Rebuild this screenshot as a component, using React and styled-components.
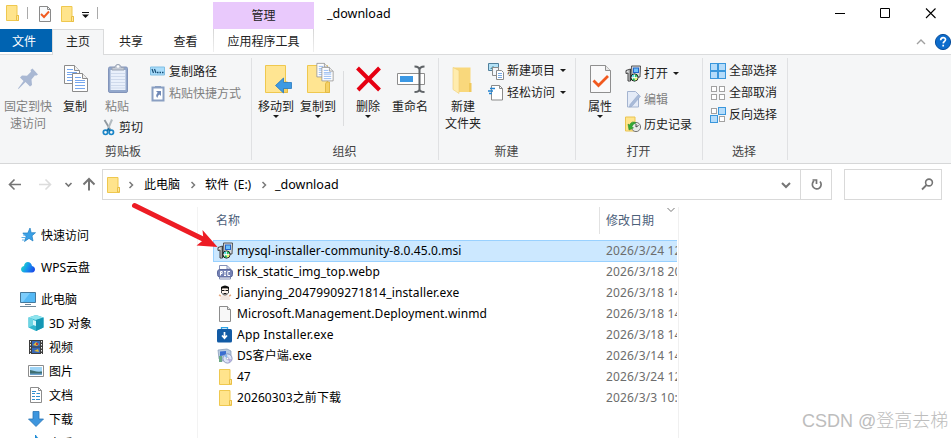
import React, { useState } from 'react';
import styled, { createGlobalStyle } from 'styled-components';

const GlobalStyle = createGlobalStyle`
  body {
    margin: 0;
    background: #fff;
    overflow: hidden;
  }
`;

const Window = styled.div`
  position: relative;
  display: flex;
  flex-direction: column;
  width: 951px;
  height: 438px;
  overflow: hidden;
  background: #fff;
  color: #000;
  font-family: "Noto Sans", "Noto Sans CJK SC", sans-serif;
  font-size: 12px;
  line-height: 17px;
  white-space: nowrap;
  cursor: default;
`;

const Svg = styled.svg`
  display: block;
  flex: none;
  overflow: visible;
`;

/* ---------- title bar ---------- */

const TitleBar = styled.div`
  display: flex;
  height: 29px;
  flex: none;
`;

const QuickAccess = styled.div`
  display: flex;
  width: 213px;
`;

const ContextTitle = styled.div`
  width: 101px;
  height: 27px;
  margin-top: 2px;
  background: #e9c9fc;
  color: #222;
  line-height: 28px;
  text-align: center;
`;

const Caption = styled.div`
  flex: 1;
  padding-left: 13px;
  font-size: 12.5px;
  line-height: 28px;
`;

const CaptionButtons = styled.div`
  display: flex;
  width: 136px;
`;

/* ---------- tabs ---------- */

const TabRow = styled.div`
  display: flex;
  height: 26px;
  flex: none;
  box-shadow: inset 0 -1px #dadbdc;
`;

const Tab = styled.div`
  box-sizing: border-box;
  width: ${p => p.$width}px;
  height: 23px;
  line-height: 25px;
  text-align: center;
  color: #222;
`;

const FileTab = styled(Tab)`
  background: #0063b1;
  color: #fff;
  padding-right: 4px;
`;

const ActiveTab = styled(Tab)`
  height: 26px;
  border: 1px solid #dadbdc;
  border-bottom: none;
  background: #f5f6f7;
  line-height: 24px;
`;

const ContextTab = styled(Tab)`
  border: solid;
  border-width: 0 1px;
  border-image: linear-gradient(#d4d4d4, #f0f0f0) 1;
`;

const TabTools = styled.div`
  flex: 1;
  display: flex;
  justify-content: flex-end;
`;

/* ---------- ribbon ---------- */

const Ribbon = styled.div`
  display: flex;
  box-sizing: border-box;
  height: 109px;
  flex: none;
  padding-top: 3px;
  background: #f5f6f7;
  border-bottom: 1px solid #d6d7d8;
`;

const Group = styled.div`
  display: flex;
  flex-direction: column;
  box-sizing: border-box;
  width: ${p => p.$width}px;
  height: 102px;
  border-right: 1px solid #e0e1e3;
`;

const GroupBody = styled.div`
  display: flex;
  height: 85px;
  padding-left: ${p => p.$left || 0}px;
`;

const GroupLabel = styled.div`
  height: 17px;
  padding-right: ${p => p.$shift || 0}px;
  text-align: center;
  color: #444;
`;

const Column = styled.div`
  display: flex;
  flex-direction: column;
  gap: ${p => p.$gap || 0}px;
  padding-top: ${p => p.$top || 0}px;
  padding-left: ${p => p.$left || 0}px;
`;

const BigButton = styled.div`
  display: flex;
  flex-direction: column;
  align-items: center;
  width: ${p => p.$width}px;
  padding-top: 4px;
  color: ${p => (p.$disabled ? '#808080' : '#222')};
  text-align: center;

  > svg:first-child {
    margin-bottom: 4px;
  }
`;

const SmallButton = styled.div`
  display: flex;
  align-items: center;
  height: 17px;
  gap: 3px;
  color: ${p => (p.$disabled ? '#808080' : '#222')};

  > svg + svg {
    margin-left: 2px;
  }
`;

const InnerRule = styled.div`
  width: 1px;
  height: 55px;
  margin: 13px 3px 0 4px;
  background: #dcdddf;
`;

/* ---------- address bar ---------- */

const AddressRow = styled.div`
  display: flex;
  height: 36px;
  flex: none;
  padding-top: 5px;
  box-sizing: border-box;
`;

const NavButtons = styled.div`
  width: 102px;
`;

const AddressBox = styled.div`
  display: flex;
  align-items: center;
  box-sizing: border-box;
  width: 730px;
  height: 31px;
  border: 1px solid #d9d9d9;
`;

const Crumb = styled.div`
  width: ${p => p.$width}px;
  word-spacing: 2px;
`;

const LastCrumb = styled.div`
  flex: 1;
  font-size: 12.5px;
`;

const Refresh = styled.div`
  box-sizing: border-box;
  width: 31px;
  height: 29px;
  border-left: 1px solid #d9d9d9;
`;

const SearchBox = styled.div`
  box-sizing: border-box;
  width: 98px;
  height: 31px;
  margin-left: 12px;
  padding-left: 76px;
  border: 1px solid #d9d9d9;
`;

/* ---------- body ---------- */

const Body = styled.div`
  display: flex;
  flex: 1;
  min-height: 0;
  padding-top: 7px;
`;

const Tree = styled.div`
  box-sizing: border-box;
  width: 198px;
  padding: 16px 0 0 20px;
  border-right: 1px solid #f3f3f3;
  overflow: hidden;
`;

const TreeItem = styled.div`
  display: flex;
  align-items: center;
  gap: 5px;
  height: 24px;
  padding-left: ${p => (p.$child ? 8 : 0)}px;
  margin-bottom: ${p => (p.$spaced ? 8 : 0)}px;
`;

const FileList = styled.div`
  box-sizing: border-box;
  width: 481px;
  padding-left: 15px;
  padding-right: 1px;
  border-right: 1px solid #f0f0f0;
`;

const Header = styled.div`
  display: flex;
  height: 27px;
  margin-bottom: 6px;
  line-height: 27px;
  color: #4c607a;
`;

const HeaderName = styled.div`
  box-sizing: border-box;
  width: 387px;
  padding-left: 3px;
  border-right: 1px solid #e2e2e2;
`;

const HeaderDate = styled.div`
  display: flex;
  gap: 13px;
  padding-left: 6px;
`;

const FileRow = styled.div`
  display: flex;
  align-items: center;
  box-sizing: border-box;
  height: ${p => (p.$selected ? 22 : 21)}px;
  padding-left: 4px;
  padding-bottom: 1px;
  overflow: hidden;
  background: ${p => (p.$selected ? '#cce8ff' : 'transparent')};
  box-shadow: ${p => (p.$selected ? 'inset 0 1px #99d1ff, inset 1px 0 #99d1ff, inset 0 -1px #99d1ff' : 'none')};
`;

const FileName = styled.div`
  flex: none;
  box-sizing: border-box;
  width: 373px;
  padding-left: 4px;
  padding-bottom: 1px;
  letter-spacing: ${p => p.$spacing || 0}px;
`;

// the column is narrower than the full timestamp, so it is cut at the pane edge
const FileDate = styled.div`
  flex: none;
  width: 71px;
  padding-bottom: 1px;
  overflow: hidden;
  letter-spacing: 0.15px;
  color: #6d6d6d;
`;

const Pointer = styled.svg`
  position: absolute;
  left: 128px;
  top: 198px;
`;

const Watermark = styled.div`
  position: absolute;
  left: 802px;
  top: 408px;
  font-family: "Liberation Sans", "Noto Sans CJK SC", sans-serif;
  font-size: 18px;
  font-weight: 300;
  line-height: 26px;
  color: #bdbdbd;
`;

/* ---------- icons ---------- */

const Folder = ({ inset = 0 }) => (
  <Svg width={16 + inset} height="16" viewBox={`${-inset} 0 ${16 + inset} 16`}>
    <path d="M2.500.500h10.500v10h1.500v5h-12z" fill="#ffe48c" stroke="#efc84f" />
    <path d="M12.500 15v-4.500h2v4.500z" fill="#ffe79b" stroke="#e9bf45" />
  </Svg>
);

const Caret = () => (
  <Svg width="6" height="3" viewBox="0 0 6 3">
    <path d="M0 0h6L3 3z" fill="#1b1b1b" />
  </Svg>
);

const QuickIcons = () => (
  <Svg width="110" height="29">
    <path d="M6.500 5.500h10.500v10h1.500v5h-12z" fill="#ffe48c" stroke="#efc84f" />
    <path d="M16.500 20.500v-5h2v5z" fill="#ffe79b" stroke="#e9bf45" />
    <path d="M27.500 7v12M97.500 7v12" stroke="#aaa" />
    <path d="M39.500 6.500h8l3 3v12h-11z" fill="#f8fafc" stroke="#8a8a8a" />
    <path d="M47.500 6.500v3h3" fill="none" stroke="#8a8a8a" />
    <path d="M41 14l3 3 5-5.500" fill="none" stroke="#f05a20" strokeWidth="1.900" />
    <path d="M61.500 6.500h10.500v10h1.500v5h-12z" fill="#ffe48c" stroke="#efc84f" />
    <path d="M71.500 21.500v-5h2v5z" fill="#ffe79b" stroke="#e9bf45" />
    <path d="M82 12.500h7" stroke="#111" />
    <path d="M82 14.500h7l-3.500 3.500z" fill="#111" />
  </Svg>
);

const CaptionIcons = () => (
  <Svg width="136" height="29">
    <g fill="none" stroke="#000">
      <path d="M20 13.500h10M65.500 8.500h9v9h-9z" />
      <path d="M111 8.500l9.500 9.500M120.500 8.500l-9.500 9.500" strokeWidth="1.100" />
    </g>
  </Svg>
);

const HelpIcons = () => (
  <Svg width="41" height="26">
    <path d="M7 15l4-4 4 4" fill="none" stroke="#a0a0a0" strokeWidth="1.400" />
    <circle cx="33" cy="13" r="7.600" fill="#0c6ccc" stroke="#0a4f9c" />
    <path d="M30.700 11.200c0-3.400 5-3.200 4.800-.4-.1 1.500-2.200 1.600-2.300 3.600M33.200 15.800v1.800" fill="none" stroke="#fff" strokeWidth="1.700" />
  </Svg>
);

const PinIcon = () => (
  <Svg width="32" height="32">
    <path d="M20.500 6.500l5.500 6-2 1.200-1-.5-3.500 4.300.5 5.500-2 1.500-4.500-4.500L6.500 27 6 26.500l5.500-7.500L8 15.500l2-2 5 .2 4-4-.5-1.700z" fill="#a9b8d3" />
  </Svg>
);

const Sheet = ({ x, y }) => (
  <g transform={`translate(${x} ${y})`}>
    <path d="M.5.500h10l5 5v13H.500z" fill="#fff" stroke="#8b8b8b" />
    <path d="M10.500.500v5h5" fill="#eee" stroke="#8b8b8b" />
    <path d="M3 4.500h6M3 7.500h10M3 9.500h10M3 12.500h10M3 15.500h10" stroke="#76a7ee" />
  </g>
);

const CopyIcon = () => (
  <Svg width="32" height="32">
    <Sheet x={5} y={3} />
    <Sheet x={13} y={11} />
  </Svg>
);

const PasteIcon = () => (
  <Svg width="32" height="32">
    <rect x="7.500" y="5" width="19" height="25.500" rx="1.500" fill="#93a8cc" stroke="#8294ba" />
    <path d="M9.500 8h15v20h-15z" fill="#e9f0fb" />
    <path d="M10 11.500h14M10 14.500h14M10 17.500h14M10 20.500h14M10 23.500h14M10 26h14" stroke="#cfdaec" />
    <path d="M11 8V5.500h3c0-4 6-4 6 0h3V8z" fill="#c5cbd6" stroke="#9aa4b5" />
    <circle cx="17" cy="4.500" r="1.200" fill="#fff" />
  </Svg>
);

const CutIcon = () => (
  <Svg width="14" height="17">
    <path d="M2.500 1l6 10" stroke="#8f989f" strokeWidth="1.800" />
    <path d="M10 .5L5.500 11" stroke="#b2babf" strokeWidth="2" />
    <circle cx="3.500" cy="13.300" r="2.200" fill="none" stroke="#1b86c8" strokeWidth="1.700" />
    <circle cx="9.300" cy="13.300" r="2.200" fill="none" stroke="#1b86c8" strokeWidth="1.700" />
    <path d="M5 12l1.500-2L8 12" fill="none" stroke="#126da6" strokeWidth="1.500" />
  </Svg>
);

const PathIcon = () => (
  <Svg width="16" height="10">
    <path d="M.5 1h14v8H.500z" fill="#a9dcfa" stroke="#80bfe4" />
    <path d="M2 3l1.500 4M4.500 3L6 7" stroke="#164c74" strokeWidth="1.200" />
    <path d="M7 6.500h1.500M9.500 6.500H11M12 6.500h1.500" stroke="#164c74" strokeWidth="1.300" />
  </Svg>
);

const ShortcutIcon = () => (
  <Svg width="16" height="17">
    <path d="M2.500 2.500h11v13h-11z" fill="#fff" stroke="#8a9fc2" strokeWidth="2" />
    <path d="M5 3V1h6v2z" fill="#8a9fc2" />
    <path d="M6 6h5v5L9.500 9.500C8 10.500 7.500 12 7.500 13 5.500 11 6 9.500 7.700 7.700z" fill="#7089b6" />
  </Svg>
);

const BigFolder = () => (
  <g>
    <path d="M5.500 3.500h20v17.500h2v9.500h-22z" fill="#ffe592" stroke="#efc84f" />
    <path d="M23.500 30v-8l1-2h3v10.500h-4z" fill="#f5d165" stroke="#e3ba45" />
  </g>
);

const MoveIcon = () => (
  <Svg width="32" height="32">
    <BigFolder />
    <path d="M15.500 23.500l8-7.500v4.500h8v6h-8V31z" fill="#3e9ae3" stroke="#2779bf" strokeWidth=".8" />
  </Svg>
);

const CopyToIcon = () => (
  <Svg width="32" height="32">
    <BigFolder />
    <g transform="translate(14.500 1) scale(.75)"><Sheet x={0} y={0} /></g>
    <g transform="translate(19.500 5) scale(.75)"><Sheet x={0} y={0} /></g>
  </Svg>
);

const DeleteIcon = () => (
  <Svg width="32" height="32">
    <path d="M5.500 6l22 22M27.500 6L6 28" stroke="#e60012" strokeWidth="4" />
  </Svg>
);

const RenameIcon = () => (
  <Svg width="32" height="32">
    <path d="M3.500 11.500h27v11h-27z" fill="#fff" stroke="#8d8d8d" />
    <path d="M6 14h13v6H6z" fill="#3b98e4" />
    <path d="M20.500 4.500q5 0 5 3.500v19q0 3-5 3M30.500 4.500q-5 0-5 3.500v19q0 3 5 3" fill="none" stroke="#5f6367" strokeWidth="2" />
  </Svg>
);

const NewFolderIcon = () => (
  <Svg width="32" height="32">
    <path d="M6 5.500h17.500v24.500H11z" fill="#f9d87c" />
    <path d="M6 5.500l6 3v23l-6-4z" fill="#ffecae" stroke="#efcf76" strokeWidth=".6" />
    <path d="M22 21h2.500v9H22z" fill="#f0c95c" />
  </Svg>
);

const NewItemIcon = () => (
  <Svg width="16" height="18">
    <path d="M.5 1.500h10v7H.500z" fill="#b4e2f7" stroke="#50809c" />
    <path d="M2 7l3-3 2 2 1-1 2 2z" fill="#4b91a0" />
    <path d="M4.500 5.500h6v8h-6z" fill="#f3f6f9" stroke="#8b8b8b" />
    <path d="M8.500 8.500h5l2 2v7h-7z" fill="#fff" stroke="#8b8b8b" />
    <path d="M10 11.500h4M10 13.500h4M10 15.500h4" stroke="#78a9e2" />
  </Svg>
);

const EasyAccessIcon = () => (
  <Svg width="16" height="17">
    <path d="M3.500 1.500h8l3 3v11.500h-11z" fill="#fff" stroke="#8b8b8b" />
    <path d="M11.500 1.500v3h3" fill="none" stroke="#8b8b8b" />
    <path d="M2 4.500h5M0 7h5M1 9.500h3" stroke="#2384d1" strokeWidth="1.400" />
  </Svg>
);

const PropertiesIcon = () => (
  <Svg width="32" height="32">
    <path d="M6.500 3.500h15l5 5v22h-20z" fill="#f9f9fa" stroke="#8f8f8f" />
    <path d="M21.500 3.500v5h5" fill="#e7e7e7" stroke="#8f8f8f" />
    <path d="M9.500 18.500l5 5 9.500-9.500" fill="none" stroke="#f1591f" strokeWidth="2.800" />
  </Svg>
);

const MsiIcon = () => (
  <Svg width="16" height="17">
    <path d="M6.500 1h9l-.5 11H7z" fill="#d9dde2" stroke="#444" strokeWidth=".9" />
    <path d="M8 2.500h6V8H8z" fill="#2364c8" />
    <path d="M9 3.500h4v3.500H9z" fill="#6cc1fb" />
    <path d="M1 5.500L5.500 4v12H3V8L1 8.500z" fill="#e6e8ea" stroke="#2b2b2b" strokeWidth=".9" />
    <path d="M4.200 5v10" stroke="#555" strokeWidth=".7" />
    <circle cx="9.500" cy="12.500" r="3.600" fill="#e8f4ea" stroke="#111" strokeWidth="1" />
    <path d="M9.500 12.500L6.500 11l2-1.800z" fill="#36dce2" />
    <path d="M9.500 12.500l3.300 1-2 2.300z" fill="#edf55a" />
    <path d="M9.500 12.500L7 14.800l3 1.200zM9.500 12.500l1-3.400 2.300 2z" fill="#1db954" />
    <circle cx="9.500" cy="12.500" r=".9" fill="#fff" />
  </Svg>
);

const EditIcon = () => (
  <Svg width="16" height="17">
    <path d="M2.500.500h8l3 3v12.500h-11z" fill="#e4ebf7" stroke="#a4b4d0" />
    <path d="M5 13.500l8.500-10 2 1.800-8.500 10L4.500 16z" fill="#a9bbd8" stroke="#8ca1c5" strokeWidth=".5" />
  </Svg>
);

const HistoryIcon = () => (
  <Svg width="16" height="17">
    <path d="M.5 1h9.500v14H.500z" fill="#ffe48c" stroke="#eac450" />
    <circle cx="11" cy="11" r="4.600" fill="#e7e9e7" stroke="#777" />
    <path d="M11 8v3l2.500-1.500" fill="none" stroke="#444" />
    <path d="M3 8l1 6 4.500-2-1.500-1.500Q8 7.500 11 7 7 4 4.500 9z" fill="#36a935" stroke="#228426" strokeWidth=".5" />
  </Svg>
);

// kind: 'all' | 'none' | 'invert'
const SelectIcon = ({ kind }) => {
  const cells = [[0, 0], [1, 0], [0, 1], [1, 1]];
  return (
    <Svg width="16" height="16">
      {cells.map(([cx, cy]) => {
        const on = kind === 'all' || (kind === 'invert' && cx !== cy);
        return on ? (
          <rect key={`${cx}${cy}`} x={cx * 8 + 0.5} y={cy * 8 + 0.5} width="7" height="7" fill="#b5dcfa" stroke="#3a97dc" />
        ) : (
          <rect key={`${cx}${cy}`} x={cx * 8 + 1.5} y={cy * 8 + 1.5} width="5" height="5" fill="#fff" stroke="#a2a2a2" />
        );
      })}
    </Svg>
  );
};

const NavIcons = () => (
  <Svg width="102" height="31">
    <g fill="none" stroke="#757575" strokeWidth="1.600">
      <path d="M21 15.500H10M14.500 10.500l-5 5 5 5" />
      <path d="M39 15.500h11M45.500 10.500l5 5-5 5" stroke="#dcdcdc" />
      <path d="M65.500 14l3 3 3-3" />
      <path d="M89 21.500V11M83.500 15.500l5.500-5.500 5.500 5.500" strokeWidth="2" />
    </g>
  </Svg>
);

const CrumbArrow = () => (
  <Svg width="8" height="10">
    <path d="M2.500 2l3 3-3 3" fill="none" stroke="#7a7a7a" strokeWidth="1.500" />
  </Svg>
);

const DropIcon = () => (
  <Svg width="10" height="8">
    <path d="M1 2l4 4 4-4" fill="none" stroke="#757575" strokeWidth="2" />
  </Svg>
);

const RefreshIcon = () => (
  <Svg width="30" height="29">
    <path d="M13 11A4.400 4.400 0 1 0 19 11.500" fill="none" stroke="#757575" strokeWidth="1.700" />
    <path d="M11.500 10h4v4" fill="none" stroke="#757575" strokeWidth="1.700" />
  </Svg>
);

const SearchIcon = () => (
  <Svg width="14" height="29">
    <circle cx="8" cy="12.500" r="3.400" fill="none" stroke="#757575" strokeWidth="1.600" />
    <path d="M5.500 15L1 19.500" stroke="#757575" strokeWidth="1.800" />
  </Svg>
);

const StarIcon = () => (
  <Svg width="16" height="16">
    <path d="M10 1l1.200 4.700H15.500L12 8.800l1 5.200-4-2.600L4.500 14.500 6 9.500 2.800 6h5z" fill="#3aa0e6" stroke="#1f7ec2" strokeWidth=".7" />
    <path d="M3 8h2.500M1.500 10.500H5M2 13h2.500" stroke="#5fb2ea" />
  </Svg>
);

const CloudIcon = () => (
  <Svg width="16" height="16">
    <defs>
      <linearGradient id="cloud" x1="0" x2="1" y1=".3" y2=".7">
        <stop offset="0" stopColor="#20e0c4" />
        <stop offset=".5" stopColor="#1693ee" />
        <stop offset="1" stopColor="#1a48e8" />
      </linearGradient>
    </defs>
    <path d="M4.500 13.500C0 13.500 0 7.500 4 7c.5-5.500 7-5.500 8 0 4 .5 4 6.500 0 6.500z" fill="url(#cloud)" />
  </Svg>
);

const PcIcon = () => (
  <Svg width="16" height="16">
    <path d="M.5 1.500h15v10H.500z" fill="#55b9f5" stroke="#45799c" />
    <path d="M1 2h9L3 11H1z" fill="#8dd5ff" opacity=".7" />
    <path d="M5 13.500h6M0 15.500h16" stroke="#6f8798" />
  </Svg>
);

const CubeIcon = () => (
  <Svg width="16" height="16">
    <path d="M8 0l7.500 2.500v10L8 16 .5 12.500v-10z" fill="#2fb6cd" />
    <path d="M8 0l7.500 2.500L8 5 .5 2.500z" fill="#8fe4ee" />
    <path d="M.5 2.500L5 4v6.500l-4.500 2z" fill="#6dd5e3" />
    <path d="M8 5v11l7.500-3.500v-10z" fill="#1496b4" />
    <path d="M5 5l3 1v5l-3-1z" fill="#d3f6fa" />
  </Svg>
);

const VideoIcon = () => (
  <Svg width="16" height="16">
    <path d="M1 1h14v14H1z" fill="#3d3d3d" />
    <path d="M2.500 2v13M13.500 2v13" stroke="#eee" strokeDasharray="1.500 1.500" />
    <path d="M4 2h8v5.500H4zM4 8.500h8V14H4z" fill="#3767b8" />
    <path d="M5 6l3-3 3 2-2 2zM6 12l4-2 1 3z" fill="#e4bc38" />
    <path d="M8 4h2v2H8z" fill="#c83c32" />
  </Svg>
);

const PictureIcon = () => (
  <Svg width="16" height="16">
    <path d="M.5 2.500h15v11H.500z" fill="#fff" stroke="#8c8c8c" />
    <path d="M2 4h12v8H2z" fill="#9ed4f6" />
    <path d="M2 7c4 1 6 2 12 1.500V12H2z" fill="#3f6f72" />
    <path d="M2 10.500h12V12H2z" fill="#6fa4cf" />
  </Svg>
);

const DocIcon = () => (
  <Svg width="16" height="16">
    <path d="M2.500.500h8l3 3v12h-11z" fill="#fff" stroke="#8c8c8c" />
    <path d="M10.500.500v3h3" fill="none" stroke="#8c8c8c" />
    <path d="M4 4.500h4M4 6.500h3M8.500 6.500H12M4 9.500h3M8 9.500h4M4 12.500h3M8 12.500h4" stroke="#318fcf" />
  </Svg>
);

const DownIcon = () => (
  <Svg width="16" height="16">
    <path d="M5 .5h6V8h4.500L8 15.500.5 8H5z" fill="#3e96de" stroke="#2a75b5" strokeWidth=".8" />
  </Svg>
);

const MusicIcon = () => (
  <Svg width="16" height="16">
    <path d="M8 0c1 3 4 3 4 6-1-2-3-2-3-2v7a3 3 0 1 1-2-2.500V0z" fill="#1f8cd6" />
  </Svg>
);

const PicFileIcon = () => (
  <Svg width="16" height="16">
    <path d="M2.500 15V1.500H10L13.500 5v10z" fill="#fff" stroke="#8490b8" />
    <path d="M10 1.500V5h3.500" fill="none" stroke="#8490b8" />
    <rect x=".5" y="5.500" width="15" height="7.500" rx="2.500" fill="#7582b4" stroke="#5c699e" />
    <path d="M3.500 11.500V7.500h1.700v2H3.500M7 7.500h2M8 7.500v4M7 11.500h2M13 7.500h-2.200v4H13" fill="none" stroke="#fff" />
  </Svg>
);

const JianyingIcon = () => (
  <Svg width="16" height="16">
    <path d="M3 15q0-5 5-5t5 5z" fill="#f2e6df" />
    <path d="M4.500 3h7v5Q8 12 4.500 8z" fill="#fdf3ec" stroke="#222" strokeWidth=".8" />
    <path d="M4 5.500V2Q8-1 12 2v3.500L10.500 3h-5z" fill="#111" />
    <path d="M5 5.500h2.500M8.500 5.500H11M6.500 8.500h3" stroke="#111" strokeWidth="1.200" />
    <path d="M2 10l2 1M14 10l-2 1" stroke="#e6a980" strokeWidth="1.500" />
  </Svg>
);

const BlankFileIcon = () => (
  <Svg width="16" height="16">
    <path d="M2.500.500h8l3 3v12h-11z" fill="#f8f8f8" stroke="#8c8c8c" />
    <path d="M10.500.500v3h3" fill="#e8e8e8" stroke="#8c8c8c" />
  </Svg>
);

const AppInstallerIcon = () => (
  <Svg width="16" height="16">
    <path d="M4.500 3V.700h6V3" fill="none" stroke="#2ba4e8" strokeWidth="1.300" />
    <rect x="0" y="2" width="15" height="13.500" rx="1.500" fill="#125ba5" />
    <path d="M7.500 5v6M5 8.500l2.500 2.700L10 8.500" fill="none" stroke="#fff" strokeWidth="1.700" />
  </Svg>
);

const SetupIcon = () => (
  <Svg width="16" height="16">
    <path d="M1 2l9-1 4 2v9L5 13 2 11z" fill="#b8cbe1" stroke="#8197b5" strokeWidth=".7" />
    <path d="M3 3.500l6-.5v4l-6 1z" fill="#3a6ed0" />
    <path d="M2 8h3v6H2z" fill="#6ba885" />
    <circle cx="10.500" cy="10.500" r="4.600" fill="#dce4f6" stroke="#7a88b4" strokeWidth=".8" />
    <path d="M10.500 10.500L7 8l3-2z" fill="#85b7ec" />
    <path d="M10.500 10.500l4 1-2 3z" fill="#b7a5e0" />
    <circle cx="10.500" cy="10.500" r="1.200" fill="#fff" stroke="#7787aa" strokeWidth=".5" />
  </Svg>
);

/* ---------- data ---------- */

const tree = [
  { label: '快速访问', icon: <StarIcon />, spaced: true },
  { label: 'WPS云盘', icon: <CloudIcon />, spaced: true },
  { label: '此电脑', icon: <PcIcon /> },
  { label: '3D 对象', icon: <CubeIcon />, child: true },
  { label: '视频', icon: <VideoIcon />, child: true },
  { label: '图片', icon: <PictureIcon />, child: true },
  { label: '文档', icon: <DocIcon />, child: true },
  { label: '下载', icon: <DownIcon />, child: true },
  { label: '音乐', icon: <MusicIcon />, child: true },
];

const files = [
  { name: 'mysql-installer-community-8.0.45.0.msi', date: '2026/3/24 12:05', icon: <MsiIcon />, spacing: 0.08 },
  { name: 'risk_static_img_top.webp', date: '2026/3/18 20:14', icon: <PicFileIcon />, spacing: 0.08 },
  { name: 'Jianying_20479909271814_installer.exe', date: '2026/3/18 14:40', icon: <JianyingIcon />, spacing: 0.14 },
  { name: 'Microsoft.Management.Deployment.winmd', date: '2026/3/18 14:32', icon: <BlankFileIcon />, spacing: 0.11 },
  { name: 'App Installer.exe', date: '2026/3/18 14:30', icon: <AppInstallerIcon />, spacing: 0.25 },
  { name: 'DS客户端.exe', date: '2026/3/14 14:21', icon: <SetupIcon />, spacing: 0.1 },
  { name: '47', date: '2026/3/24 12:01', icon: <Folder /> },
  { name: '20260303之前下载', date: '2026/3/3 10:16', icon: <Folder />, spacing: 0.1 },
];

const App = () => {
  const [selected, setSelected] = useState(0);

  return (
    <Window>
      <GlobalStyle />
      <TitleBar>
        <QuickAccess><QuickIcons /></QuickAccess>
        <ContextTitle>管理</ContextTitle>
        <Caption>_download</Caption>
        <CaptionButtons><CaptionIcons /></CaptionButtons>
      </TitleBar>

      <TabRow>
        <FileTab $width={52}>文件</FileTab>
        <ActiveTab $width={52}>主页</ActiveTab>
        <Tab $width={54}>共享</Tab>
        <Tab $width={55}>查看</Tab>
        <ContextTab $width={101}>应用程序工具</ContextTab>
        <TabTools><HelpIcons /></TabTools>
      </TabRow>

      <Ribbon>
        <Group $width={252}>
          <GroupBody>
            <BigButton $width={56} $disabled><PinIcon />固定到快<br />速访问</BigButton>
            <BigButton $width={38}><CopyIcon />复制</BigButton>
            <Column>
              <BigButton $width={46} $disabled><PasteIcon />粘贴</BigButton>
              <Column $left={8} $top={4}>
                <SmallButton><CutIcon />剪切</SmallButton>
              </Column>
            </Column>
            <Column $top={4.5} $gap={5} $left={7}>
              <SmallButton><PathIcon />复制路径</SmallButton>
              <SmallButton $disabled><ShortcutIcon />粘贴快捷方式</SmallButton>
            </Column>
          </GroupBody>
          <GroupLabel $shift={5}>剪贴板</GroupLabel>
        </Group>

        <Group $width={187}>
          <GroupBody $left={3}>
            <BigButton $width={42}><MoveIcon />移动到<Caret /></BigButton>
            <BigButton $width={42}><CopyToIcon />复制到<Caret /></BigButton>
            <InnerRule />
            <BigButton $width={42}><DeleteIcon />删除<Caret /></BigButton>
            <BigButton $width={42}><RenameIcon />重命名</BigButton>
          </GroupBody>
          <GroupLabel $shift={1}>组织</GroupLabel>
        </Group>

        <Group $width={137}>
          <GroupBody $left={3}>
            <BigButton $width={42}><NewFolderIcon />新建<br />文件夹</BigButton>
            <Column $top={4} $gap={5} $left={4}>
              <SmallButton><NewItemIcon />新建项目<Caret /></SmallButton>
              <SmallButton><EasyAccessIcon />轻松访问<Caret /></SmallButton>
            </Column>
          </GroupBody>
          <GroupLabel $shift={1}>新建</GroupLabel>
        </Group>

        <Group $width={127}>
          <GroupBody $left={3}>
            <BigButton $width={42}><PropertiesIcon />属性<Caret /></BigButton>
            <Column $top={7} $gap={8.5} $left={4}>
              <SmallButton><MsiIcon />打开<Caret /></SmallButton>
              <SmallButton $disabled><EditIcon />编辑</SmallButton>
              <SmallButton><HistoryIcon />历史记录</SmallButton>
            </Column>
          </GroupBody>
          <GroupLabel $shift={1}>打开</GroupLabel>
        </Group>

        <Group $width={85}>
          <GroupBody $left={7}>
            <Column $top={4} $gap={5}>
              <SmallButton><SelectIcon kind="all" />全部选择</SmallButton>
              <SmallButton><SelectIcon kind="none" />全部取消</SmallButton>
              <SmallButton><SelectIcon kind="invert" />反向选择</SmallButton>
            </Column>
          </GroupBody>
          <GroupLabel $shift={2}>选择</GroupLabel>
        </Group>
      </Ribbon>

      <AddressRow>
        <NavButtons><NavIcons /></NavButtons>
        <AddressBox>
          <Crumb $width={24}><Folder inset={2} /></Crumb>
          <Crumb $width={17}><CrumbArrow /></Crumb>
          <Crumb $width={45}>此电脑</Crumb>
          <Crumb $width={16}><CrumbArrow /></Crumb>
          <Crumb $width={55}>软件 (E:)</Crumb>
          <Crumb $width={15}><CrumbArrow /></Crumb>
          <LastCrumb>_download</LastCrumb>
          <Crumb $width={19}><DropIcon /></Crumb>
          <Refresh><RefreshIcon /></Refresh>
        </AddressBox>
        <SearchBox><SearchIcon /></SearchBox>
      </AddressRow>

      <Body>
        <Tree>
          {tree.map(item => (
            <TreeItem key={item.label} $child={item.child} $spaced={item.spaced}>
              {item.icon}
              {item.label}
            </TreeItem>
          ))}
        </Tree>
        <FileList>
          <Header>
            <HeaderName>名称</HeaderName>
            <HeaderDate>
              修改日期
              <Svg width="8" height="6">
                <path d="M.5 1l3.500 3.500L7.500 1" fill="none" stroke="#777" />
              </Svg>
            </HeaderDate>
          </Header>
          {files.map((file, i) => (
            <FileRow key={file.name} $selected={i === selected} onClick={() => setSelected(i)}>
              {file.icon}
              <FileName $spacing={file.spacing}>{file.name}</FileName>
              <FileDate>{file.date}</FileDate>
            </FileRow>
          ))}
        </FileList>
      </Body>

      <Pointer width="94" height="54">
        <path d="M6.500 7.500L77 42" stroke="#ed1c24" strokeWidth="5" strokeLinecap="round" />
        <path d="M74.500 32L89.500 49 68.500 47.500 75.500 42z" fill="#ed1c24" />
      </Pointer>
      <Watermark>CSDN @登高去梯</Watermark>
    </Window>
  );
};

export default App;
